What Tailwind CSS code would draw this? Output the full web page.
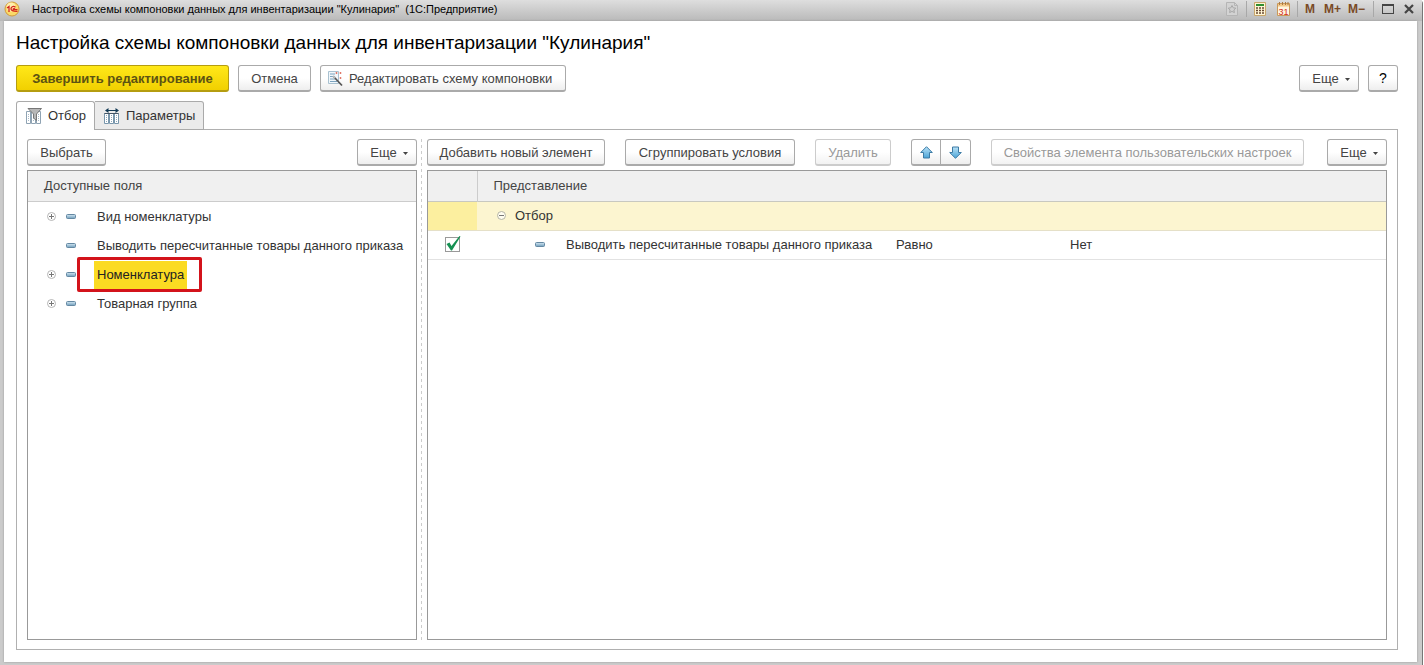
<!DOCTYPE html>
<html lang="ru">
<head>
<meta charset="utf-8">
<title>Настройка схемы компоновки данных</title>
<script src="https://cdn.jsdelivr.net/npm/@tailwindcss/browser@4"></script>
</head>
<body class="h-screen overflow-hidden bg-white font-['Liberation_Sans',Arial,sans-serif] text-[13px] leading-4 text-[#333]">
<svg class="absolute h-0 w-0" aria-hidden="true">
  <defs>
    <linearGradient id="dash" x1="0" y1="0" x2="0" y2="1"><stop offset="0" stop-color="#d5e8f3"/><stop offset="1" stop-color="#6f9dbb"/></linearGradient>
    <linearGradient id="arrow" x1="0" y1="0" x2="0" y2="1"><stop offset="0" stop-color="#b9e2f7"/><stop offset="1" stop-color="#4aa3d6"/></linearGradient>
  </defs>
  <symbol id="i-dash" viewBox="0 0 10 5"><rect x=".5" y=".5" width="9" height="4" rx="1" fill="url(#dash)" stroke="#6488a2"/></symbol>
  <symbol id="i-plus" viewBox="0 0 9 9"><circle cx="4.5" cy="4.5" r="4" fill="#fff" stroke="#b5b5b5"/><path d="M2 4.500h5M4.500 2v5" stroke="#777"/></symbol>
  <symbol id="i-minus" viewBox="0 0 9 9"><circle cx="4.500" cy="4.500" r="4" fill="#fffdf0" stroke="#b5b5a5"/><path d="M2 4.500h5" stroke="#777"/></symbol>
  <symbol id="i-caret" viewBox="0 0 5 3"><path d="M0 0h5L2.500 3z" fill="#444"/></symbol>
</svg>
<div class="flex h-full pr-px">
<div class="flex min-w-0 flex-1 flex-col rounded-tr border-r border-[#777] bg-[#cbcbcb] pb-[3px]">
  <header class="flex h-[21px] shrink-0 items-center bg-linear-to-b from-[#dedede] to-[#b9b9b9] pr-2 pb-[3px] pl-1 text-[11px] text-black">
    <svg class="mr-3 h-4 w-4" viewBox="0 0 16 16"><circle cx="8" cy="8" r="7" fill="#fbd968" stroke="#cf9a3c"/><circle cx="7" cy="6" r="4.500" fill="#fff0ad"/><path d="M3 7l2-1.500V11M11.500 6.200C9 4.500 6.800 6 7 8c.2 2.200 2 2.500 6.500 2.400M11 7.800c-1.800-.8-2.500.7-1.200.9h3.700" fill="none" stroke="#d3231c" stroke-width="1.300"/></svg>
    <span class="flex-1 truncate whitespace-pre">Настройка схемы компоновки данных для инвентаризации "Кулинария"  (1С:Предприятие)</span>
    <button class="mr-1.5 h-4 w-4" aria-label="В избранное"><svg viewBox="0 0 16 16"><path d="M2.500 1.500h8l3 3v10h-11zM10.500 1.500v3h3" fill="#d3d3d3" stroke="#b5b5b5"/><path d="M8 4.500l1.200 2.300 2.600.4-1.900 1.800.5 2.600L8 10.400l-2.400 1.200.5-2.600-1.900-1.800 2.600-.4z" fill="#d0d0d0" stroke="#a8a8a8"/></svg></button>
    <span class="mr-[5px] h-4 w-px bg-[#a8a8a8]"></span>
    <button class="mr-[7px] h-4 w-4" aria-label="Калькулятор"><svg viewBox="0 0 16 16"><path d="M2.500 1.500h11v13h-11z" fill="#fff5d5" stroke="#c9a66b"/><path d="M4 3h8v2H4z" fill="#2f8f2f"/><path d="M4 7h8M4 9.500h8M4 12h8" stroke="#6a4a32" stroke-width="1.400" stroke-dasharray="2 1"/></svg></button>
    <button class="mr-1.5 h-4 w-4" aria-label="Календарь"><svg viewBox="0 0 16 16"><path d="M2.500 2.500h12v12h-12z" fill="#fff5e0" stroke="#c9985a"/><path d="M3 3h11v2.500H3z" fill="#f3c98a"/><path d="M4.500 1v3M7.500 1v3M10.500 1v3M13 1v3" stroke="#a97a45"/><text x="8.500" y="13.500" text-anchor="middle" font-size="9" fill="#d22c1c">31</text></svg></button>
    <span class="mr-[7px] h-4 w-px bg-[#a8a8a8]"></span>
    <div class="mr-2 flex gap-[7px] text-xs font-bold text-[#7a4a26]"><button class="mr-0.5">M</button><button>M+</button><button>M−</button></div>
    <span class="mr-2 h-4 w-px bg-[#a8a8a8]"></span>
    <button class="mr-2.5 h-[10px] w-3 border border-t-2 border-[#444]" aria-label="Развернуть"></button>
    <button aria-label="Закрыть"><svg class="h-2.5 w-2.5" viewBox="0 0 10 10"><path d="M1 1l8 8M9 1l-8 8" stroke="#444" stroke-width="2.200"/></svg></button>
  </header>
  <main class="mr-[5px] ml-1 flex min-h-0 flex-1 flex-col bg-white pt-3 pr-[19px] pb-3 pl-3 shadow-[0_0_2px_#999]">
    <h1 class="text-[19px] leading-5 text-black">Настройка схемы компоновки данных для инвентаризации "Кулинария"</h1>
    <div class="mt-3 flex h-[27px] shrink-0 gap-[9px]">
      <button class="w-[213px] rounded-[3px] border border-b-2 border-[#b59d10] bg-linear-to-b from-[#ffe818] to-[#f1d000] pt-px font-bold text-[#5d5312]">Завершить редактирование</button>
      <button class="w-[73px] rounded-[3px] border border-b-2 border-[#aaa] bg-linear-to-b from-white from-50% to-[#eee] pt-px text-[#444]">Отмена</button>
      <button class="flex w-[246px] items-center gap-1.5 rounded-[3px] border border-b-2 border-[#aaa] bg-linear-to-b from-white from-50% to-[#eee] pt-px pl-1.5 text-[#444]"><svg class="h-4 w-4" viewBox="0 0 16 16"><path d="M1.500 .5h10v12h-10z" fill="#f1f7fb" stroke="#a9c1d0"/><path d="M3 3h5M3 5.500h4M3 8h5M3 10.500h7" stroke="#7ba3bf"/><path d="M6.500 5.500l8.500 9" stroke="#555" stroke-width="1.800"/><path d="M6 5l2 2" stroke="#bbb" stroke-width="2"/><path d="M8.500 2h2M9.500 1v2M12.500 2h2M13.500 1v2M12.500 7h2M13.500 6v2" stroke="#e0786a"/></svg>Редактировать схему компоновки</button>
      <button class="ml-auto flex w-[60px] items-center justify-center gap-1.5 rounded-[3px] border border-b-2 border-[#aaa] bg-linear-to-b from-white from-50% to-[#eee] pt-px pl-1 text-[#444]">Еще<svg class="mt-0.5 h-[3px] w-[5px]"><use href="#i-caret"/></svg></button>
      <button class="w-[30px] rounded-[3px] border border-b-2 border-[#aaa] bg-linear-to-b from-white from-50% to-[#eee] text-sm text-black">?</button>
    </div>
    <div class="z-10 mt-[9px] -mb-px flex h-[29px] shrink-0" role="tablist">
      <button role="tab" aria-selected="true" class="flex w-[79px] items-center gap-1.5 rounded-t-[3px] border border-b-0 border-[#aaa] bg-white pl-[9px]"><svg class="h-4 w-4" viewBox="0 0 16 16"><path d="M.5 3.500h4v12h-4zM5.500 3.500h4v12h-4zM10.500 3.500h4v12h-4z" fill="#fff" stroke="#8fa3b3"/><path d="M2.500 6v8M7.500 6v8M12.500 6v8" stroke="#a9bac7" stroke-dasharray="1 1"/><path d="M2 .5h13.500L10.500 6v6.500L7.500 10V6z" fill="#b7b7b7" stroke="#777"/></svg>Отбор</button>
      <button role="tab" aria-selected="false" class="flex w-[109px] items-center gap-1.5 rounded-tr-[3px] border border-l-0 border-[#aaa] bg-[#ebebeb] pl-[9px]"><svg class="h-4 w-4" viewBox="0 0 16 16"><path d="M.5 5.500h4v10h-4zM5.500 5.500h4v10h-4zM10.500 5.500h4v10h-4z" fill="#fff" stroke="#7896ac"/><path d="M.5 5.500h14" stroke="#456"/><path d="M2.500 7v8M7.500 7v8M12.500 7v8" stroke="#8fa8ba" stroke-dasharray="1 1"/><path d="M3 2.500h10" stroke="#123a56"/><path d="M1 2.500l3.500-2.500v5zM15 2.500L11.500 0v5z" fill="#123a56"/></svg>Параметры</button>
    </div>
    <section class="flex min-h-0 flex-1 border border-[#b0b0b0] px-[10px] py-[9px]">
      <div class="flex w-[390px] shrink-0 flex-col gap-1">
        <div class="flex h-[27px] shrink-0 justify-between">
          <button class="w-[79px] rounded-[3px] border border-b-2 border-[#aaa] bg-linear-to-b from-white from-50% to-[#eee] pt-px text-[#444]">Выбрать</button>
          <button class="flex w-[60px] items-center justify-center gap-1.5 rounded-[3px] border border-b-2 border-[#aaa] bg-linear-to-b from-white from-50% to-[#eee] pt-px pl-1 text-[#444]">Еще<svg class="mt-0.5 h-[3px] w-[5px]"><use href="#i-caret"/></svg></button>
        </div>
        <div class="min-h-0 flex-1 border border-[#999]">
          <table class="w-full table-fixed border-collapse text-left">
            <thead><tr class="h-[30px] border-b border-[#ccc] bg-[#f0f0f0]"><th class="pl-4 font-normal text-[#444]">Доступные поля</th></tr></thead>
            <tbody class="[&_td]:pt-0.5">
              <tr class="h-[29px]"><td><div class="flex items-center pl-[19px]"><svg class="mr-[10px] h-[9px] w-[9px]"><use href="#i-plus"/></svg><svg class="mr-[21px] h-[5px] w-[10px]"><use href="#i-dash"/></svg>Вид номенклатуры</div></td></tr>
              <tr class="h-[29px]"><td><div class="flex items-center pl-[38px] whitespace-nowrap"><svg class="mr-[21px] h-[5px] w-[10px] shrink-0"><use href="#i-dash"/></svg>Выводить пересчитанные товары данного приказа</div></td></tr>
              <tr class="h-[29px]"><td><div class="relative flex h-[27px] items-center pl-[19px]"><svg class="mr-[10px] h-[9px] w-[9px]"><use href="#i-plus"/></svg><svg class="mr-[18px] h-[5px] w-[10px]"><use href="#i-dash"/></svg><span class="bg-[#fbdb22] px-[3px] py-1.5 text-[#222]">Номенклатура</span><span class="absolute -top-1 left-[49px] h-[35px] w-[125px] rounded-xs border-3 border-[#d3131b]"></span></div></td></tr>
              <tr class="h-[29px]"><td><div class="flex items-center pl-[19px]"><svg class="mr-[10px] h-[9px] w-[9px]"><use href="#i-plus"/></svg><svg class="mr-[21px] h-[5px] w-[10px]"><use href="#i-dash"/></svg>Товарная группа</div></td></tr>
            </tbody>
          </table>
        </div>
      </div>
      <div class="mx-1 w-px shrink-0 bg-[repeating-linear-gradient(#ccc_0_3px,transparent_3px_6px)]"></div>
      <div class="ml-px flex min-w-0 flex-1 flex-col gap-1">
        <div class="flex h-[27px] shrink-0 gap-5">
          <button class="w-[178px] rounded-[3px] border border-b-2 border-[#aaa] bg-linear-to-b from-white from-50% to-[#eee] pt-px text-[#444]">Добавить новый элемент</button>
          <button class="w-[170px] rounded-[3px] border border-b-2 border-[#aaa] bg-linear-to-b from-white from-50% to-[#eee] pt-px text-[#444]">Сгруппировать условия</button>
          <button disabled class="w-[76px] rounded-[3px] border border-b-2 border-[#ccc] bg-linear-to-b from-white from-50% to-[#f2f2f2] pt-px text-[#999]">Удалить</button>
          <div class="flex w-[60px]">
            <button class="flex w-[30px] items-center justify-center rounded-l-[3px] border border-b-2 border-[#aaa] bg-linear-to-b from-white from-50% to-[#eee]" aria-label="Вверх"><svg class="h-[13px] w-[13px]" viewBox="0 0 13 13"><path d="M6.500 .7L12.300 6.500H9.500V12h-6V6.500H.7z" fill="url(#arrow)" stroke="#3d7ba5"/></svg></button>
            <button class="flex w-[30px] items-center justify-center rounded-r-[3px] border border-b-2 border-l-0 border-[#aaa] bg-linear-to-b from-white from-50% to-[#eee]" aria-label="Вниз"><svg class="h-[13px] w-[13px]" viewBox="0 0 13 13"><path d="M6.500 12.300L12.300 6.500H9.500V1h-6v5.500H.7z" fill="url(#arrow)" stroke="#3d7ba5"/></svg></button>
          </div>
          <button disabled class="w-[313px] rounded-[3px] border border-b-2 border-[#ccc] bg-linear-to-b from-white from-50% to-[#f2f2f2] pt-px text-[#999]">Свойства элемента пользовательских настроек</button>
          <button class="ml-auto flex w-[60px] items-center justify-center gap-1.5 rounded-[3px] border border-b-2 border-[#aaa] bg-linear-to-b from-white from-50% to-[#eee] pt-px pl-1 text-[#444]">Еще<svg class="mt-0.5 h-[3px] w-[5px]"><use href="#i-caret"/></svg></button>
        </div>
        <div class="min-h-0 flex-1 border border-[#999]">
          <table class="w-full table-fixed border-collapse text-left">
            <colgroup><col class="w-[49px]"><col class="w-[411px]"><col class="w-[174px]"><col></colgroup>
            <thead><tr class="h-[30px] border-b border-[#c8c8c0] bg-[#f0f0f0] text-[#444]"><th class="border-r border-[#ccc]" aria-label="Использование"></th><th colspan="3" class="pl-4 font-normal">Представление</th></tr></thead>
            <tbody>
              <tr class="h-[29px] border-b border-[#e5e0c8] bg-[#fcf5d0]"><td class="bg-[#fcef9f]"></td><td colspan="3"><div class="flex items-center pl-5"><svg class="mr-[9px] h-[9px] w-[9px]"><use href="#i-minus"/></svg>Отбор</div></td></tr>
              <tr class="h-[29px] border-b border-[#e2e2e2]"><td><label class="relative ml-[17px] block h-[15px] w-[15px]"><input type="checkbox" checked aria-label="Использовать" class="block h-[15px] w-[15px] appearance-none border border-[#999] bg-white"><svg class="absolute -top-px left-0 h-4 w-4" viewBox="0 0 16 16"><path d="M1.500 8l3-1.500 2 3.500L14.500 0l1 .5L7 14.500H6z" fill="#159052"/></svg></label></td><td><div class="flex items-center pl-[58px] whitespace-nowrap"><svg class="mr-[21px] h-[5px] w-[10px] shrink-0"><use href="#i-dash"/></svg>Выводить пересчитанные товары данного приказа</div></td><td class="pl-2">Равно</td><td class="pl-2">Нет</td></tr>
            </tbody>
          </table>
        </div>
      </div>
    </section>
  </main>
</div>
</div>
</body>
</html>
